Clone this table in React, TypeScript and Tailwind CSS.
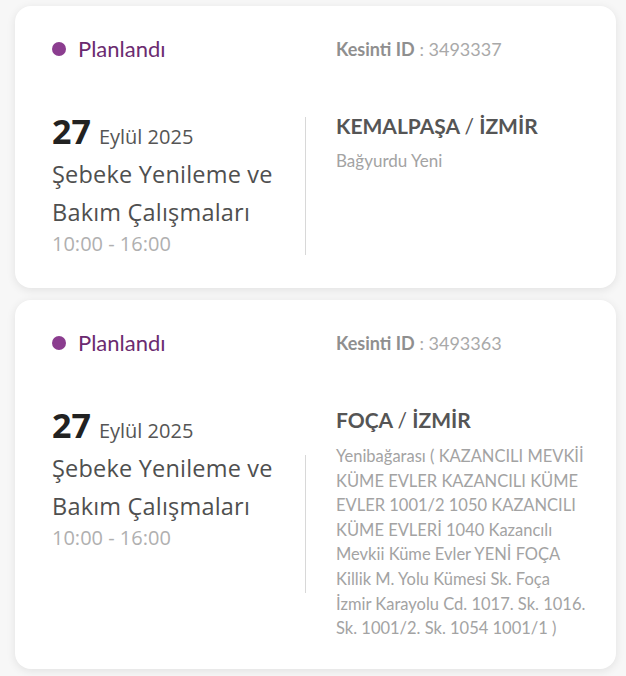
const outages = [
  {
    id: "3493337",
    day: "27",
    month: "Eylül 2025",
    title: "Şebeke Yenileme ve Bakım Çalışmaları",
    time: "10:00 - 16:00",
    district: "KEMALPAŞA",
    city: "İZMİR",
    detail: ["Bağyurdu Yeni"],
    small: true,
  },
  {
    id: "3493363",
    day: "27",
    month: "Eylül 2025",
    title: "Şebeke Yenileme ve Bakım Çalışmaları",
    time: "10:00 - 16:00",
    district: "FOÇA",
    city: "İZMİR",
    detail: [
      "Yenibağarası ( KAZANCILI MEVKİİ",
      "KÜME EVLER KAZANCILI KÜME",
      "EVLER 1001/2 1050 KAZANCILI",
      "KÜME EVLERİ 1040 Kazancılı",
      "Mevkii Küme Evler YENİ FOÇA",
      "Killik M. Yolu Kümesi Sk. Foça",
      "İzmir Karayolu Cd. 1017. Sk. 1016.",
      "Sk. 1001/2. Sk. 1054 1001/1 )",
    ],
    small: false,
  },
];

const geo = "font-['Lato','Noto_Sans',sans-serif]";
const hum = "font-['Open_Sans','Noto_Sans',sans-serif]";

function OutageCard({ o }: { o: (typeof outages)[number] }) {
  return (
    <div
      className={`rounded-2xl bg-white px-[37px] pt-[30px] shadow-[0_2px_10px_rgba(0,0,0,0.09)] ${
        o.small ? "pb-[31px]" : "pb-[28px]"
      }`}
    >
      {/* header */}
      <div className="flex">
        <div className="flex w-[253px] shrink-0 items-center gap-3">
          <span className="h-[14px] w-[14px] rounded-full bg-[#8b3d8f]" />
          <span className={`${geo} text-[22px] leading-[26px] text-[#6b2b70]`}>Planlandı</span>
        </div>
        <div className={`${geo} pl-[31px] text-[18px] leading-[26px] text-[#a9a9a9]`}>
          <span className="font-bold text-[#8f8f8f]">Kesinti ID</span> : {o.id}
        </div>
      </div>

      {/* body */}
      <div className="mt-[52px] flex">
        <div className={`${hum} w-[253px] shrink-0`}>
          <div className="flex items-baseline gap-2">
            <span className="text-[34px] font-bold leading-[34px] text-[#222]">{o.day}</span>
            <span className="text-[20px] text-[#555]">{o.month}</span>
          </div>
          <div className="mt-[3px] text-[23.5px] leading-[38px] tracking-[0.2px] text-[#4f4f4f]">
            {o.title}
          </div>
          <div className="text-[20px] leading-[26px] text-[#b0b0b0]">{o.time}</div>
        </div>
        <div className="flex shrink-0 items-center">
          <div className="h-[138px] w-px bg-[#d8d8d8]" />
        </div>
        <div className={`${geo} min-w-0 flex-1 pl-[30px]`}>
          <div className="text-[21px] font-bold leading-[24px] text-[#555]">
            {o.district} <span className="font-normal">/</span> {o.city}
          </div>
          <div
            className={
              o.small
                ? "mt-[12px] text-[17px] leading-[22px] text-[#a3a3a3]"
                : "mt-[12px] whitespace-nowrap text-[16.5px] leading-[24.6px] text-[#a3a3a3]"
            }
          >
            {o.detail.map((line) => (
              <div key={line}>{line}</div>
            ))}
          </div>
        </div>
      </div>
    </div>
  );
}

export default function App() {
  return (
    <div className="min-h-screen w-[626px] bg-[#f7f7f7] pl-[15px] pt-[6px]">
      <div className="flex w-[601px] flex-col gap-[12px]">
        {outages.map((o) => (
          <OutageCard key={o.id} o={o} />
        ))}
      </div>
    </div>
  );
}
